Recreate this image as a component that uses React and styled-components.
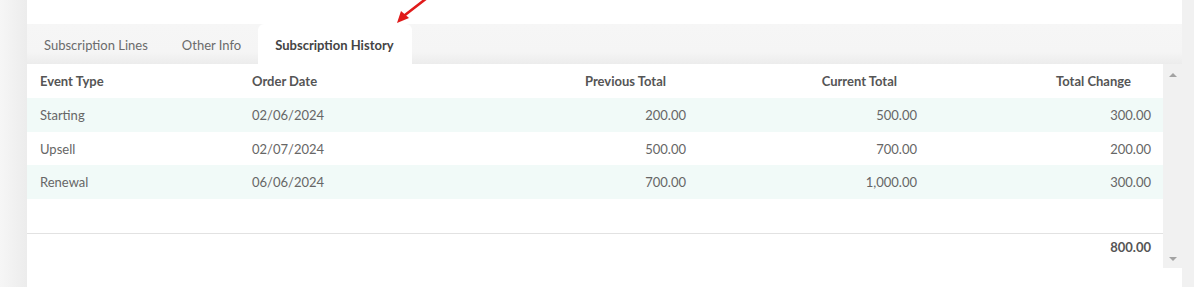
import React from "react";
import styled, { createGlobalStyle } from "styled-components";

const Global = createGlobalStyle`
  html, body { margin: 0; padding: 0; background: #f3f3f3; }
  body { font-family: "Source Sans Pro", Lato, "Open Sans", sans-serif; }
  * { box-sizing: border-box; }
`;

const Page = styled.div`
  position: relative;
  display: flex;
  width: 1194px;
  height: 287px;
  overflow: hidden;
`;

const Gutter = styled.div`
  flex: 0 0 ${(p) => p.$w}px;
  background: ${(p) => p.$bg};
`;

const Panel = styled.div`
  flex: 1;
  display: flex;
  flex-direction: column;
  background: #fff;
`;

const TopSpace = styled.div`
  height: 24px;
  background: #fff;
`;

const TabBar = styled.div`
  display: flex;
  height: 40px;
  background: linear-gradient(to bottom, #f6f6f6 0%, #f5f5f5 70%, #ececec 100%);
`;

const Tab = styled.div`
  display: flex;
  align-items: center;
  padding: 2px ${(p) => (p.$active ? 18 : 17)}px 0 17px;
  font-size: 13px;
  color: ${(p) => (p.$active ? "#444" : "#6b6b6b")};
  font-weight: ${(p) => (p.$active ? 700 : 400)};
  background: ${(p) => (p.$active ? "#fff" : "transparent")};
  border-radius: ${(p) => (p.$active ? "6px 6px 0 0" : "0")};
`;

const Body = styled.div`
  display: flex;
  height: 204px;
`;

const Grid = styled.div`
  flex: 0 0 1136px;
  display: flex;
  flex-direction: column;
`;

const cols = "212px 231px 228px 231px 234px";

const Row = styled.div`
  display: grid;
  grid-template-columns: ${cols};
  height: ${(p) => p.$h}px;
  align-items: center;
  background: ${(p) => (p.$alt ? "#f1faf8" : "#fff")};
  border-top: ${(p) => (p.$line ? "1px solid #e2e2e2" : "none")};
`;

const Cell = styled.div`
  padding: 0 12px 0 13px;
  font-size: 13px;
  text-align: ${(p) => (p.$right ? "right" : "left")};
  padding-right: ${(p) => (p.$head && p.$right ? 32 : 12)}px;
  color: ${(p) => (p.$head || p.$bold ? "#555" : "#666")};
  font-weight: ${(p) => (p.$head || p.$bold ? 700 : 400)};
  white-space: nowrap;
`;

const Spacer = styled.div`
  height: 34px;
`;

const Scroll = styled.div`
  flex: 0 0 19px;
  display: flex;
  flex-direction: column;
  justify-content: space-between;
  align-items: center;
  background: #f1f1f1;
  padding: 9px 0 7px;
`;

const Tri = styled.div`
  width: 0;
  height: 0;
  border-left: 4px solid transparent;
  border-right: 4px solid transparent;
  ${(p) =>
    p.$up
      ? "border-bottom: 4px solid #a3a3a3;"
      : "border-top: 4px solid #a3a3a3;"}
`;

const Rest = styled.div`
  flex: 1;
  background: #fff;
`;

const Arrow = styled.svg`
  position: absolute;
  left: 390px;
  top: 0;
`;

const rows = [
  ["Starting", "02/06/2024", "200.00", "500.00", "300.00"],
  ["Upsell", "02/07/2024", "500.00", "700.00", "200.00"],
  ["Renewal", "06/06/2024", "700.00", "1,000.00", "300.00"],
];

export default function App() {
  return (
    <>
      <Global />
      <Page>
        <Gutter $w={27} $bg="linear-gradient(to right, #f6f6f6, #ececec)" />
        <Panel>
          <TopSpace />
          <TabBar>
            <Tab>Subscription Lines</Tab>
            <Tab>Other Info</Tab>
            <Tab $active>Subscription History</Tab>
          </TabBar>
          <Body>
            <Grid>
              <Row $h={34}>
                <Cell $head>Event Type</Cell>
                <Cell $head>Order Date</Cell>
                <Cell $head $right>Previous Total</Cell>
                <Cell $head $right>Current Total</Cell>
                <Cell $head $right>Total Change</Cell>
              </Row>
              {rows.map((r, i) => (
                <Row key={i} $h={i === 1 ? 33 : 34} $alt={i !== 1}>
                  <Cell>{r[0]}</Cell>
                  <Cell>{r[1]}</Cell>
                  <Cell $right>{r[2]}</Cell>
                  <Cell $right>{r[3]}</Cell>
                  <Cell $right>{r[4]}</Cell>
                </Row>
              ))}
              <Spacer />
              <Row $h={27} $line>
                <Cell />
                <Cell />
                <Cell />
                <Cell />
                <Cell $right $bold>800.00</Cell>
              </Row>
            </Grid>
            <Scroll>
              <Tri $up />
              <Tri />
            </Scroll>
          </Body>
          <Rest />
        </Panel>
        <Gutter $w={12} $bg="#f1f1f1" />
        <Arrow width="40" height="30" viewBox="0 0 40 30">
          <line x1="37" y1="-2" x2="15" y2="15" stroke="#e01b1b" strokeWidth="2.6" strokeLinecap="round" />
          <polygon points="7,23 11,11 19,18" fill="#e01b1b" />
        </Arrow>
      </Page>
    </>
  );
}
